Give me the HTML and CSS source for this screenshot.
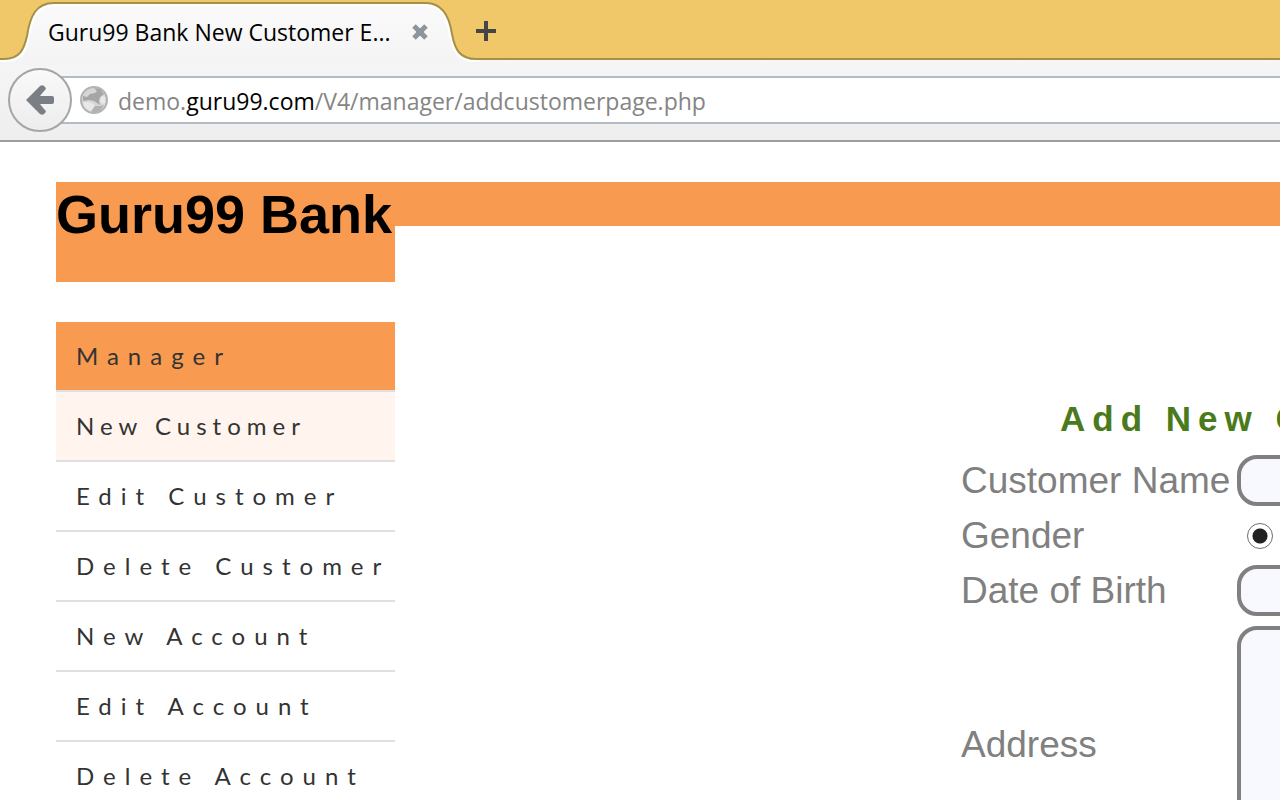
FILE: index.html
```html
<!DOCTYPE html>
<html lang="en">
<head>
<meta charset="utf-8">
<title>Guru99 Bank New Customer Entry Page</title>
<link rel="stylesheet" href="styles.css">
</head>
<body>
<header class="browser">
  <div class="tab-strip">
    <div class="tab">
      <svg class="tab-shape" width="480" height="66" viewBox="0 0 480 66" aria-hidden="true">
        <defs>
          <linearGradient id="tabFill" x1="0" y1="0" x2="0" y2="1">
            <stop offset="0" stop-color="#fafafa"/>
            <stop offset="1" stop-color="#f4f4f4"/>
          </linearGradient>
        </defs>
        <path d="M0 66V59H4C20 59 24 49 27 36C30 16 36 3 54 3H426C440 3 449 14 452 34C455 50 460 59 476 59H480V66Z" fill="url(#tabFill)"/>
        <path d="M0 61H5C22 61 26 51 29 37C32 17 38 5 54 5H426C439 5 447 16 450 35C453 51 459 61 475 61H480" fill="none" stroke="#fff" stroke-width="2"/>
        <path d="M0 59H4C20 59 24 49 27 36C30 16 36 3 54 3H426C440 3 449 14 452 34C455 50 460 59 476 59H480" fill="none" stroke="#a59048" stroke-width="2"/>
      </svg>
      <span class="tab-title">Guru99 Bank New Customer E...</span>
      <button class="tab-close" type="button" aria-label="Close tab">
        <svg width="18" height="18" viewBox="0 0 18 18"><path d="M3 3L15 15M15 3L3 15" stroke="#8c969f" stroke-width="5"/><circle cx="9" cy="9" r="4" fill="#8c969f"/></svg>
      </button>
    </div>
    <button class="tab-new" type="button" aria-label="New tab">
      <svg width="20" height="20" viewBox="0 0 20 20"><path d="M10 0V20M0 10H20" stroke="#454545" stroke-width="4"/></svg>
    </button>
  </div>
  <div class="toolbar">
    <button class="back" type="button" aria-label="Back">
      <svg width="28" height="32" viewBox="0 0 28 32"><path d="M0 16L14 2Q17 0 19 3Q21 5 18 7L14 12H26Q28 12 28 14V18Q28 20 26 20H14L18 25Q21 27 19 29Q17 32 14 30Z" fill="#7a7f85"/></svg>
    </button>
    <div class="address-bar">
      <svg class="globe" width="28" height="28" viewBox="0 0 28 28" aria-hidden="true">
        <circle cx="14" cy="14" r="13" fill="#d6d6d6" stroke="#b4b4b4" stroke-width="2"/>
        <path d="M14 2L20 3L24 8L20 11L19 15L20 19L17 17L14 15L9 14L3 15L3 10L7 11L10 8L15 7L17 5Z" fill="#a6a6a6"/>
        <path d="M15 20L20 20L24 19L20 25L13 27L11 25Z" fill="#b2b2b2"/>
        <path d="M3 16L9 16L14 18L14 21L11 25C6 24 3 20 3 16Z" fill="#e8e8e8"/>
        <path d="M22 10L25 11V17L22 18L20 15Z" fill="#eaeaea"/>
      </svg>
      <div class="url" role="textbox" contenteditable="true" spellcheck="false" aria-label="Address">demo.<span class="url-domain">guru99.com</span>/V4/manager/addcustomerpage.php</div>
    </div>
  </div>
</header>

<div class="page">
  <div class="banner"><h1 class="brand">Guru99 Bank</h1></div>
  <div class="columns">
    <nav class="menu">
      <a class="menu-link menu-head" href="#manager">Manager</a>
      <a class="menu-link menu-current" href="#new-customer">New Customer</a>
      <a class="menu-link" href="#edit-customer">Edit Customer</a>
      <a class="menu-link" href="#delete-customer">Delete Customer</a>
      <a class="menu-link" href="#new-account">New Account</a>
      <a class="menu-link" href="#edit-account">Edit Account</a>
      <a class="menu-link" href="#delete-account">Delete Account</a>
    </nav>
    <form class="entry">
      <h2 class="entry-title">Add New Customer</h2>
      <label class="label" for="name">Customer Name</label>
      <input class="field" id="name" type="text">
      <label class="label" for="gender">Gender</label>
      <input class="radio" id="gender" type="radio" name="gender" checked>
      <label class="label" for="dob">Date of Birth</label>
      <input class="field" id="dob" type="text">
      <label class="label" for="address">Address</label>
      <textarea class="field area" id="address"></textarea>
    </form>
  </div>
</div>
</body>
</html>
```

FILE: styles.css
```css
* {
  box-sizing: border-box;
}

body {
  margin: 0;
  background: #fff;
  color: #000;
  font-family: "Liberation Sans", Arial, sans-serif;
  overflow: hidden;
}

button {
  margin: 0;
  padding: 0;
  border: 0;
  background: none;
  display: flex;
  align-items: center;
  justify-content: center;
}

/* Browser window */
.browser {
  font-family: "Open Sans", "Noto Sans", sans-serif;
}

.tab-strip {
  display: flex;
  align-items: center;
  height: 60px;
  background: #f0c869;
  border-bottom: 2px solid #a59048;
}

.tab {
  position: relative;
  display: flex;
  align-items: center;
  justify-content: space-between;
  width: 476px;
  height: 58px;
  padding: 6px 47px 0 48px;
}

.tab-shape {
  position: absolute;
  left: 0;
  top: 0;
}

.tab-title {
  position: relative;
  font-size: 23px;
  line-height: 32px;
  white-space: nowrap;
}

.tab-close {
  position: relative;
}

.tab-new {
  padding-top: 4px;
}

.toolbar {
  display: flex;
  align-items: center;
  height: 82px;
  padding-left: 8px;
  background: linear-gradient(#f6f6f6, #eeeeee);
  border-bottom: 2px solid #9d9d9d;
}

.back {
  position: relative;
  z-index: 1;
  flex: none;
  width: 64px;
  height: 64px;
  border: 2px solid #a5a5a5;
  border-radius: 50%;
  background: linear-gradient(#f9f9f9, #ededed);
}

.address-bar {
  display: flex;
  align-items: center;
  gap: 10px;
  flex: 1;
  height: 48px;
  margin-left: -16px;
  padding-left: 24px;
  background: #fff;
  border: solid #b3bcc6;
  border-width: 2px 0;
}

.url {
  flex: 1;
  padding-top: 2px;
  color: #858585;
  font-size: 23px;
  line-height: 32px;
  white-space: nowrap;
}

.url-domain {
  color: #000;
}

/* Bank page */
.page {
  padding: 40px 0 0 56px;
}

.banner {
  height: 44px;
  background: #f89a50;
}

.brand {
  width: 339px;
  height: 100px;
  margin: 0;
  background: #f89a50;
  font-size: 54px;
  line-height: 64px;
  white-space: nowrap;
}

.columns {
  display: flex;
  align-items: flex-start;
  gap: 566px;
  padding-top: 96px;
}

.menu {
  flex: none;
  width: 339px;
}

.menu-link {
  display: block;
  padding: 16px 0 16px 20px;
  border-bottom: 2px solid #e0e0e0;
  color: #333;
  font-family: Lato, sans-serif;
  font-size: 24px;
  line-height: 36px;
  letter-spacing: 9px;
  text-decoration: none;
  white-space: nowrap;
}

.menu-head {
  background: #f89a50;
}

.menu-current {
  background: #fff5ee;
  letter-spacing: 6px;
}

.entry {
  display: grid;
  grid-template-columns: 272px 440px;
  column-gap: 4px;
  row-gap: 4px;
  align-items: center;
  padding-top: 76px;
}

.entry-title {
  grid-column: 1 / -1;
  margin: 0 0 11px;
  padding-left: 99px;
  color: #4a7a1c;
  font-size: 35px;
  line-height: 42px;
  letter-spacing: 7px;
  white-space: nowrap;
}

.label {
  color: #808080;
  font-size: 37px;
  line-height: 51px;
  white-space: nowrap;
}

.field {
  width: 100%;
  height: 51px;
  margin: 0;
  padding: 4px 12px;
  border: 4px solid #808080;
  border-radius: 20px;
  background: #f8f8ff;
  font-size: 32px;
}

.radio {
  appearance: none;
  width: 26px;
  height: 26px;
  margin: 0 0 0 10px;
  border: 1px solid #707070;
  border-radius: 50%;
  background: radial-gradient(circle, #222 7px, #fff 8px);
}

.area {
  height: 242px;
  margin-top: 6px;
  resize: none;
}
```
